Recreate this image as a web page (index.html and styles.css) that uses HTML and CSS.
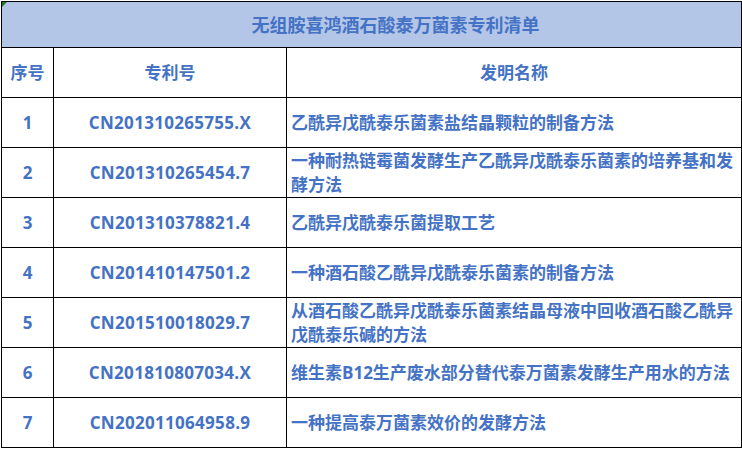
FILE: index.html
```html
<!DOCTYPE html>
<html lang="zh-CN">
<head>
<meta charset="utf-8">
<title>专利清单</title>
<link rel="stylesheet" href="styles.css">
</head>
<body>
<div class="sheet">
  <span class="corner-mark"></span>
  <table class="patents">
    <colgroup>
      <col class="c-no">
      <col class="c-id">
      <col class="c-name">
    </colgroup>
    <thead>
      <tr class="title-row"><th colspan="3">无组胺喜鸿酒石酸泰万菌素专利清单</th></tr>
      <tr class="head-row"><th>序号</th><th>专利号</th><th>发明名称</th></tr>
    </thead>
    <tbody>
      <tr><td class="no">1</td><td class="id">CN201310265755.X</td><td class="name">乙酰异戊酰泰乐菌素盐结晶颗粒的制备方法</td></tr>
      <tr><td class="no">2</td><td class="id">CN201310265454.7</td><td class="name">一种耐热链霉菌发酵生产乙酰异戊酰泰乐菌素的培养基和发酵方法</td></tr>
      <tr><td class="no">3</td><td class="id">CN201310378821.4</td><td class="name">乙酰异戊酰泰乐菌提取工艺</td></tr>
      <tr><td class="no">4</td><td class="id">CN201410147501.2</td><td class="name">一种酒石酸乙酰异戊酰泰乐菌素的制备方法</td></tr>
      <tr><td class="no">5</td><td class="id">CN201510018029.7</td><td class="name">从酒石酸乙酰异戊酰泰乐菌素结晶母液中回收酒石酸乙酰异戊酰泰乐碱的方法</td></tr>
      <tr><td class="no">6</td><td class="id">CN201810807034.X</td><td class="name">维生素B12生产废水部分替代泰万菌素发酵生产用水的方法</td></tr>
      <tr><td class="no">7</td><td class="id">CN202011064958.9</td><td class="name">一种提高泰万菌素效价的发酵方法</td></tr>
    </tbody>
  </table>
</div>
</body>
</html>
```

FILE: styles.css
```css
html, body {
  margin: 0;
  padding: 0;
  background: #ffffff;
}

.sheet {
  position: relative;
  padding: 1px 0 0 1px;
  width: 741px;
}

.corner-mark {
  position: absolute;
  left: 2px;
  top: 2px;
  width: 0;
  height: 0;
  border-top: 5px solid #1a7f1a;
  border-right: 5px solid transparent;
}

.patents {
  border-collapse: collapse;
  table-layout: fixed;
  width: 740px;
  font-family: "Open Sans", "Noto Sans CJK SC", sans-serif;
  font-weight: 700;
  font-size: 17px;
  color: #4472c4;
}

.c-no { width: 52px; }
.c-id { width: 233px; }
.c-name { width: 455px; }

.patents th,
.patents td {
  border: 1px solid #000000;
  padding: 0;
  vertical-align: middle;
  font-weight: 700;
}

.title-row th {
  height: 45px;
  background: #b4c6e7;
  font-size: 18px;
  text-align: center;
  padding-left: 48px;
  line-height: 24px;
}

.head-row th {
  height: 49px;
  text-align: center;
  line-height: 24px;
}

.patents tbody td {
  height: 49px;
  line-height: 24px;
}

.no,
.id {
  text-align: center;
}

.id {
  letter-spacing: 0.3px;
}

.name {
  text-align: left;
  padding: 0 2px 0 4px !important;
}
```
